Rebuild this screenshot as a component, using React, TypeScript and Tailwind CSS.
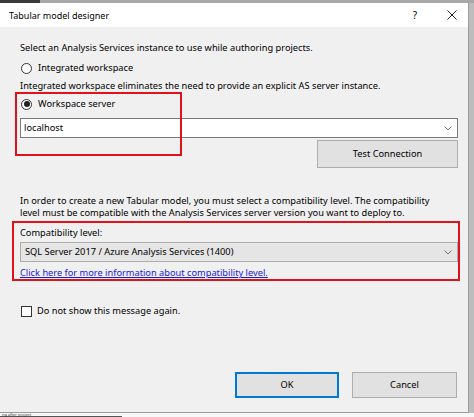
import React from "react";

function Chevron() {
  return (
    <svg width="8" height="5" viewBox="0 0 8 5" className="shrink-0">
      <path d="M0.5 0.5 L4 4 L7.5 0.5" fill="none" stroke="#7a7a7a" strokeWidth="1" />
    </svg>
  );
}

function Radio({ checked }: { checked?: boolean }) {
  return (
    <span className="w-[11px] h-[11px] rounded-full border border-[#333] bg-white flex items-center justify-center shrink-0">
      {checked && <span className="w-[6px] h-[6px] rounded-full bg-[#222]" />}
    </span>
  );
}

export default function App() {
  return (
    <div
      className="w-[474px] h-[417px] bg-[#bdbdbd] overflow-hidden relative flex flex-col"
      style={{ fontFamily: '"Noto Sans", "Segoe UI", sans-serif' }}
    >
      <div className="h-[3px] bg-[#a8a8a8] shrink-0 flex">
        <span className="w-[40px] h-[3px] bg-[#3a3a3a]" />
      </div>
      <div className="w-[469px] h-[410px] shrink-0 flex flex-col bg-[#f0f0f0] border-r border-b border-[#9a9a9a] text-[9.25px] text-black leading-none">
        {/* Title bar */}
        <div className="h-[24px] bg-white flex items-center pl-[9px] pr-[11px] shrink-0">
          <span className="text-[9px]">Tabular model designer</span>
          <span className="ml-auto mr-[30px] text-[10px]">?</span>
          <svg width="10" height="10" viewBox="0 0 10 10">
            <path d="M0.5 0.5 L9.5 9.5 M9.5 0.5 L0.5 9.5" stroke="#222" strokeWidth="1" />
          </svg>
        </div>

        {/* Body */}
        <div className="flex flex-col pl-[20px] pr-[10px] flex-1">
          <div className="mt-[15px] h-[12px] flex items-center">Select an Analysis Services instance to use while authoring projects.</div>
          <div className="mt-[8px] h-[12px] flex items-center gap-[6px] pl-[1px]">
            <Radio />
            <span>Integrated workspace</span>
          </div>
          <div className="mt-[6px] h-[12px] flex items-center">Integrated workspace eliminates the need to provide an explicit AS server instance.</div>

          {/* Workspace server area */}
          <div className="relative mt-[6px]">
            <div className="absolute left-[-5px] top-[-6px] w-[167px] h-[64px] border-2 border-[#e0121b] pointer-events-none" />
            <div className="h-[12px] flex items-center gap-[6px] pl-[1px]">
              <Radio checked />
              <span>Workspace server</span>
            </div>
            <div className="mt-[8px] h-[20px] bg-white border border-[#7a7a7a] flex items-center pl-[3px] pr-[5px]">
              <span>localhost</span>
              <span className="ml-auto"><Chevron /></span>
            </div>
            <div className="flex justify-end mt-[2px]">
              <div className="w-[141px] h-[28px] bg-[#e1e1e1] border border-[#adadad] flex items-center justify-center">
                Test Connection
              </div>
            </div>
          </div>

          <div className="mt-[27px] leading-[12px] max-w-[418px]">
            In order to create a new Tabular model, you must select a compatibility level. The compatibility level must be compatible with the Analysis Services server version you want to deploy to.
          </div>

          {/* Compatibility */}
          <div className="relative mt-[8px]">
            <div className="absolute left-[-8px] top-[-6px] w-[448px] h-[60px] border-2 border-[#e0121b] pointer-events-none" />
            <div className="h-[12px] flex items-center">Compatibility level:</div>
            <div className="mt-[3px] h-[20px] bg-[#e5e5e5] border border-[#acacac] flex items-center pl-[4px] pr-[5px]">
              <span>SQL Server 2017 / Azure Analysis Services (1400)</span>
              <span className="ml-auto"><Chevron /></span>
            </div>
            <div className="mt-[5px] h-[12px] flex items-center">
              <span className="text-[#1a1ad6] underline">Click here for more information about compatibility level.</span>
            </div>
          </div>

          <div className="mt-[26px] h-[12px] flex items-center gap-[5px] pl-[1px]">
            <span className="w-[11px] h-[11px] border border-[#333] bg-white shrink-0" />
            <span>Do not show this message again.</span>
          </div>

          <div className="flex-1" />
          <div className="flex justify-end gap-[13px] pb-[14px] pr-[1px]">
            <div className="w-[104px] h-[26px] bg-[#e1e1e1] border-2 border-[#0078d7] flex items-center justify-center">OK</div>
            <div className="w-[105px] h-[26px] bg-[#e1e1e1] border border-[#adadad] flex items-center justify-center">Cancel</div>
          </div>
        </div>
      </div>
      <div className="flex-1 bg-[#f7f7f7] flex items-start overflow-hidden">
        <span className="text-[4px] leading-[4px] text-[#333] pl-[2px] w-[122px] h-[4px] border-b border-[#555]">ng after project</span>
      </div>
    </div>
  );
}
